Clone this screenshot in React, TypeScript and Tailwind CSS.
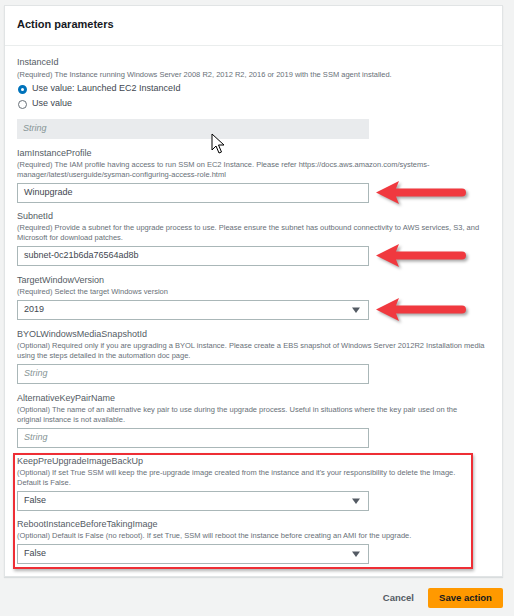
import React from "react";

type FieldProps = {
  label: string;
  desc: string[];
  className?: string;
  children: React.ReactNode;
};

const Arrow: React.FC = () => (
  <svg
    className="absolute left-[358px] top-[-3px] drop-shadow-[2px_2px_1.5px_rgba(0,0,0,0.35)]"
    width="94"
    height="26"
    viewBox="0 0 94 26"
  >
    <path
      d="M1 12.5 L24 1 L21 8.5 L87 8.5 Q91 8.5 91 12.5 Q91 16.5 87 16.5 L21 16.5 L24 24 Z"
      fill="#f0393f"
    />
  </svg>
);

const Caret: React.FC = () => (
  <svg width="8" height="6" viewBox="0 0 8 6" className="mr-[8px]">
    <path d="M0 0.5 L8 0.5 L4 6 Z" fill="#545b64" />
  </svg>
);

const TextBox: React.FC<{ value?: string; placeholder?: string }> = ({ value, placeholder }) => (
  <div className="flex h-[20px] w-[352px] items-center border border-[#aab7b8] bg-white px-[6px] text-[9px]">
    {value ? (
      <span className="text-[#414750]">{value}</span>
    ) : (
      <span className="italic text-[#879596]">{placeholder}</span>
    )}
  </div>
);

const SelectBox: React.FC<{ value: string }> = ({ value }) => (
  <div className="flex h-[20px] w-[352px] items-center justify-between border border-[#aab7b8] bg-white pl-[6px] text-[9px] text-[#414750]">
    <span>{value}</span>
    <Caret />
  </div>
);

const Field: React.FC<FieldProps> = ({ label, desc, className, children }) => (
  <div className={className}>
    <div className="h-[12px] text-[9px] leading-[12px] text-[#545b64]">{label}</div>
    <div className="mt-[1px] w-[472px] text-[7.5px] leading-[10px] text-[#687078]">
      {desc.map((d) => (
        <div key={d} className="whitespace-nowrap">
          {d}
        </div>
      ))}
    </div>
    <div className="relative mt-[3px]">{children}</div>
  </div>
);

export default function App() {
  return (
    <div className="relative min-h-[616px] bg-[#f2f3f3] pl-[4px] pt-[5px] font-['Liberation_Sans',Arial,sans-serif]">
      <div className="w-[499px] border border-[#e1e4e5] bg-white shadow-[0_1px_1px_rgba(0,28,36,0.1)]">
        <div className="flex h-[40px] items-center border-b border-[#eaeded] px-[12px] pb-[3px]">
          <h2 className="text-[11px] font-bold text-[#16191f]">Action parameters</h2>
        </div>

        <div className="px-[12px] pb-[7px] pt-[10px]">
          {/* InstanceId */}
          <div>
            <div className="h-[12px] text-[9px] leading-[12px] text-[#545b64]">InstanceId</div>
            <div className="mt-[2px] text-[7.5px] leading-[10px] text-[#687078]">
              (Required) The Instance running Windows Server 2008 R2, 2012 R2, 2016 or 2019 with the SSM agent installed.
            </div>
            <div className="mt-[2px] flex h-[14px] items-center gap-[5px] text-[9px] text-[#414750]">
              <span className="ml-[1px] h-[9px] w-[9px] rounded-full border-[3px] border-[#0073bb] bg-white" />
              <span>Use value: Launched EC2 InstanceId</span>
            </div>
            <div className="mt-[1px] flex h-[14px] items-center gap-[5px] text-[9px] text-[#414750]">
              <span className="ml-[1px] h-[9px] w-[9px] rounded-full border border-[#687078] bg-white" />
              <span>Use value</span>
            </div>
            <div className="mt-[8px] flex h-[20px] w-[352px] items-center bg-[#e9ebed] px-[6px] text-[9px] italic text-[#879596]">
              String
            </div>
          </div>

          <Field
            className="mt-[8px]"
            label="IamInstanceProfile"
            desc={[
              "(Required) The IAM profile having access to run SSM on EC2 Instance. Please refer https://docs.aws.amazon.com/systems-",
              "manager/latest/userguide/sysman-configuring-access-role.html",
            ]}
          >
            <TextBox value="Winupgrade" />
            <Arrow />
          </Field>

          <Field
            className="mt-[7px]"
            label="SubnetId"
            desc={[
              "(Required) Provide a subnet for the upgrade process to use. Please ensure the subnet has outbound connectivity to AWS services, S3, and",
              "Microsoft for download patches.",
            ]}
          >
            <TextBox value="subnet-0c21b6da76564ad8b" />
            <Arrow />
          </Field>

          <Field
            className="mt-[8px]"
            label="TargetWindowVersion"
            desc={["(Required) Select the target Windows version"]}
          >
            <SelectBox value="2019" />
            <Arrow />
          </Field>

          <Field
            className="mt-[8px]"
            label="BYOLWindowsMediaSnapshotId"
            desc={[
              "(Optional) Required only if you are upgrading a BYOL instance. Please create a EBS snapshot of Windows Server 2012R2 Installation media",
              "using the steps detailed in the automation doc page.",
            ]}
          >
            <TextBox placeholder="String" />
          </Field>

          <Field
            className="mt-[8px]"
            label="AlternativeKeyPairName"
            desc={[
              "(Optional) The name of an alternative key pair to use during the upgrade process. Useful in situations where the key pair used on the",
              "original instance is not available.",
            ]}
          >
            <TextBox placeholder="String" />
          </Field>

          <div className="-ml-[4px] mt-[5px] w-[460px] border-2 border-[#ee2e35] pb-[3px] pl-[2px] shadow-[1px_2px_3px_rgba(0,0,0,0.3)]">
            <Field
              label="KeepPreUpgradeImageBackUp"
              desc={[
                "(Optional) If set True SSM will keep the pre-upgrade image created from the instance and it's your responsibility to delete the Image.",
                "Default is False.",
              ]}
            >
              <SelectBox value="False" />
            </Field>
            <Field
              className="mt-[7px]"
              label="RebootInstanceBeforeTakingImage"
              desc={[
                "(Optional) Default is False (no reboot). If set True, SSM will reboot the instance before creating an AMI for the upgrade.",
              ]}
            >
              <SelectBox value="False" />
            </Field>
          </div>
        </div>
      </div>

      <div className="mt-[11px] flex w-[499px] items-center justify-end gap-[14px]">
        <button className="text-[9.5px] font-bold text-[#545b64]">Cancel</button>
        <button className="h-[20px] w-[75px] rounded-[2px] bg-[#ff9900] text-[9.5px] font-bold text-[#16191f]">
          Save action
        </button>
      </div>

      {/* mouse pointer */}
      <svg className="absolute left-[211px] top-[133px]" width="14" height="22" viewBox="0 0 14 22">
        <path
          d="M1 1 L1 17 L5 13 L8 20 L10.5 19 L7.5 12 L13 12 Z"
          fill="#fff"
          stroke="#000"
          strokeWidth="1"
          strokeLinejoin="round"
        />
      </svg>
    </div>
  );
}
